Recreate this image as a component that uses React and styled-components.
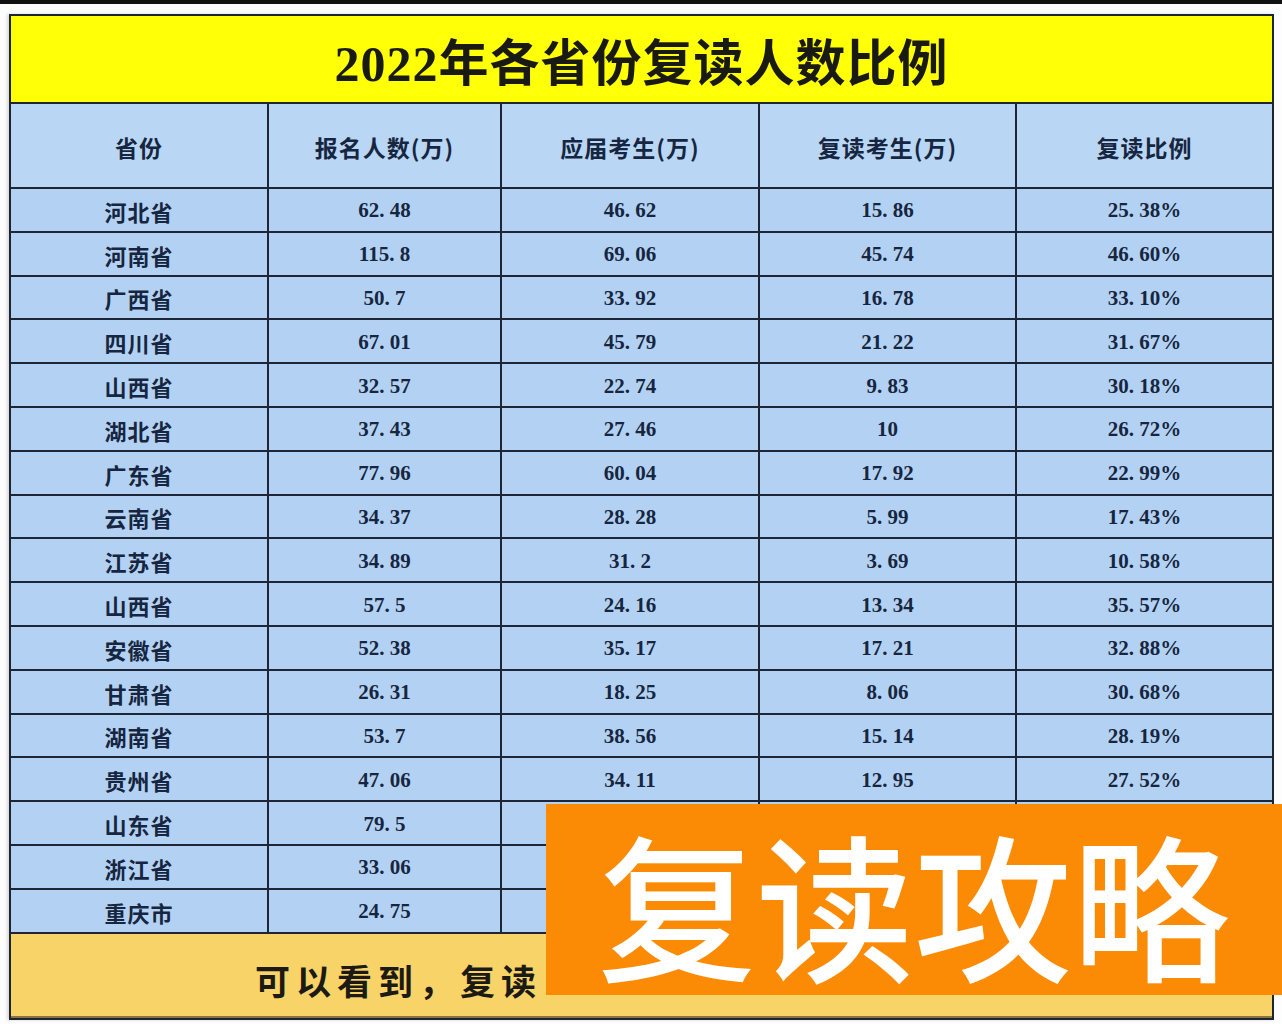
import React from 'react'
import styled, { createGlobalStyle } from 'styled-components'

const Global = createGlobalStyle`
  html, body { margin: 0; padding: 0; background: #ffffff; }
`

const Page = styled.div`
  position: relative;
  width: 1282px;
  height: 1024px;
  overflow: hidden;
  background: #fdfdfd;
`

const TopBar = styled.div`
  height: 4px;
  background: #111;
`

const Frame = styled.div`
  margin: 10px 8px 0 9px;
  border: 2px solid #1d2530;
  box-shadow: -2px 0 3px rgba(0,0,0,0.15);
`

const Title = styled.div`
  height: 86px;
  background: #ffff08;
  border-bottom: 2px solid #1d2530;
  display: flex;
  align-items: center;
  justify-content: center;
  font-family: "Liberation Serif", "Noto Sans CJK SC", serif;
  font-weight: 700;
  font-size: 50px;
  letter-spacing: 1px;
  color: #1a1a14;
`

const Grid = styled.div`
  display: grid;
  grid-template-columns: 258px 233px 258px 257px 1fr;
  grid-template-rows: 85px;
  grid-auto-rows: 43.8px;
  background: #b5d3f3;
`

const Cell = styled.div`
  display: flex;
  align-items: center;
  justify-content: center;
  border-right: ${p => (p.last ? 'none' : '2px solid #1c2636')};
  border-bottom: 2px solid #1c2636;
  background: ${p => (p.head ? '#b9d6f5' : '#b3d2f3')};
  color: #172640;
  font-family: ${p => (p.cjk
    ? '"Noto Sans CJK SC", sans-serif'
    : '"Liberation Serif", "Noto Sans CJK SC", serif')};
  font-weight: 700;
  font-size: ${p => (p.head ? '23px' : p.cjk ? '22px' : '21px')};
  letter-spacing: ${p => (p.cjk ? '1px' : '0')};
  padding-top: 2px;
  box-sizing: border-box;
`

const Footer = styled.div`
  height: 84px;
  background: #f8d468;
  border-bottom: 2px solid #8a7440;
  display: flex;
  align-items: center;
  padding-left: 244px;
  font-family: "Noto Sans CJK SC", sans-serif;
  font-weight: 700;
  font-size: 35px;
  letter-spacing: 6px;
  color: #1c1a14;
  padding-top: 10px;
  box-sizing: border-box;
`

const Badge = styled.div`
  position: absolute;
  left: 546px;
  top: 804px;
  width: 736px;
  height: 191px;
  background: #fb8a04;
  display: flex;
  align-items: center;
  justify-content: center;
  color: #ffffff;
  font-family: "Noto Sans CJK SC", sans-serif;
  font-weight: 500;
  font-size: 158px;
  line-height: 1;
  letter-spacing: 0;
  padding: 4px 0 0 0;
  box-sizing: border-box;
`

const headers = ['省份', '报名人数(万)', '应届考生(万)', '复读考生(万)', '复读比例']

// the last three rows are covered by the badge past the second column
const rows = [
  ['河北省', '62. 48', '46. 62', '15. 86', '25. 38%'],
  ['河南省', '115. 8', '69. 06', '45. 74', '46. 60%'],
  ['广西省', '50. 7', '33. 92', '16. 78', '33. 10%'],
  ['四川省', '67. 01', '45. 79', '21. 22', '31. 67%'],
  ['山西省', '32. 57', '22. 74', '9. 83', '30. 18%'],
  ['湖北省', '37. 43', '27. 46', '10', '26. 72%'],
  ['广东省', '77. 96', '60. 04', '17. 92', '22. 99%'],
  ['云南省', '34. 37', '28. 28', '5. 99', '17. 43%'],
  ['江苏省', '34. 89', '31. 2', '3. 69', '10. 58%'],
  ['山西省', '57. 5', '24. 16', '13. 34', '35. 57%'],
  ['安徽省', '52. 38', '35. 17', '17. 21', '32. 88%'],
  ['甘肃省', '26. 31', '18. 25', '8. 06', '30. 68%'],
  ['湖南省', '53. 7', '38. 56', '15. 14', '28. 19%'],
  ['贵州省', '47. 06', '34. 11', '12. 95', '27. 52%'],
  ['山东省', '79. 5', '', '', ''],
  ['浙江省', '33. 06', '', '', ''],
  ['重庆市', '24. 75', '', '', ''],
]

export default function App() {
  return (
    <Page>
      <Global />
      <TopBar />
      <Frame>
        <Title>2022年各省份复读人数比例</Title>
        <Grid>
          {headers.map((h, i) => (
            <Cell key={h} head cjk last={i === 4}>{h}</Cell>
          ))}
          {rows.map((r, ri) =>
            r.map((v, ci) => (
              <Cell key={ri + '-' + ci} cjk={ci === 0} last={ci === 4}>{v}</Cell>
            ))
          )}
        </Grid>
        <Footer>可以看到，复读</Footer>
      </Frame>
      <Badge>复读攻略</Badge>
    </Page>
  )
}
